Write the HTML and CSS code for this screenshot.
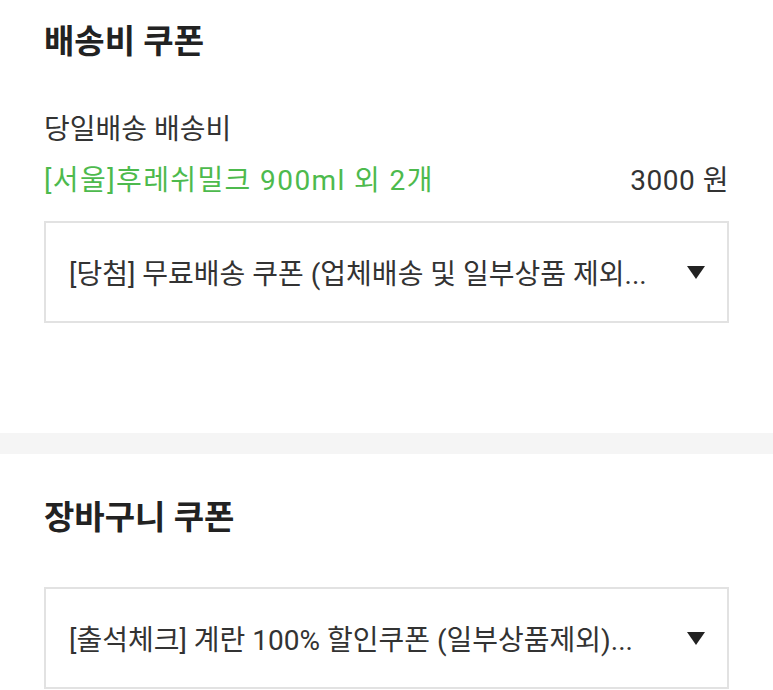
FILE: index.html
```html
<!DOCTYPE html>
<html lang="ko">
<head>
<meta charset="utf-8">
<link rel="stylesheet" href="styles.css">
</head>
<body>
<section class="section first">
  <h2 class="title">배송비 쿠폰</h2>
  <div class="label">당일배송 배송비</div>
  <div class="row">
    <span class="product">[서울]후레쉬밀크 900ml 외 2개</span>
    <span class="price">3000 원</span>
  </div>
  <div class="select">
    <span class="select-text">[당첨] 무료배송 쿠폰 (업체배송 및 일부상품 제외...</span>
    <svg class="arrow" width="18" height="13" viewBox="0 0 18 13"><polygon points="0,0 18,0 9,13" fill="#222"/></svg>
  </div>
</section>
<div class="divider"></div>
<section class="section second">
  <h2 class="title">장바구니 쿠폰</h2>
  <div class="select">
    <span class="select-text">[출석체크] 계란 100% 할인쿠폰 (일부상품제외)...</span>
    <svg class="arrow" width="18" height="13" viewBox="0 0 18 13"><polygon points="0,0 18,0 9,13" fill="#222"/></svg>
  </div>
</section>
</body>
</html>
```

FILE: styles.css
```css
html, body {
  margin: 0;
  padding: 0;
  background: #fff;
}
body {
  font-family: Roboto, "Noto Sans CJK KR", sans-serif;
  color: #333;
  overflow: hidden;
}
.section {
  padding: 0 44px;
}
.first {
  padding-top: 20px;
  height: 413px;
}
.second {
  padding-top: 42px;
}
.title {
  margin: 0;
  font-size: 33px;
  font-weight: 700;
  line-height: 44px;
  color: #222;
}
.label {
  margin-top: 46px;
  font-size: 28px;
  line-height: 40px;
  color: #333;
}
.row {
  display: flex;
  justify-content: space-between;
  align-items: center;
  margin-top: 11px;
  font-size: 28px;
  line-height: 40px;
}
.product {
  color: #4dba4d;
  letter-spacing: 1.4px;
}
.price {
  color: #333;
  letter-spacing: 0.5px;
}
.select {
  display: flex;
  align-items: center;
  justify-content: space-between;
  height: 98px;
  border: 2px solid #e2e2e2;
  padding: 0 22px 0 23px;
  margin-top: 20px;
  font-size: 28px;
  color: #333;
}
.second .select {
  margin-top: 47px;
}
.divider {
  height: 21px;
  background: #f5f5f5;
}
```
